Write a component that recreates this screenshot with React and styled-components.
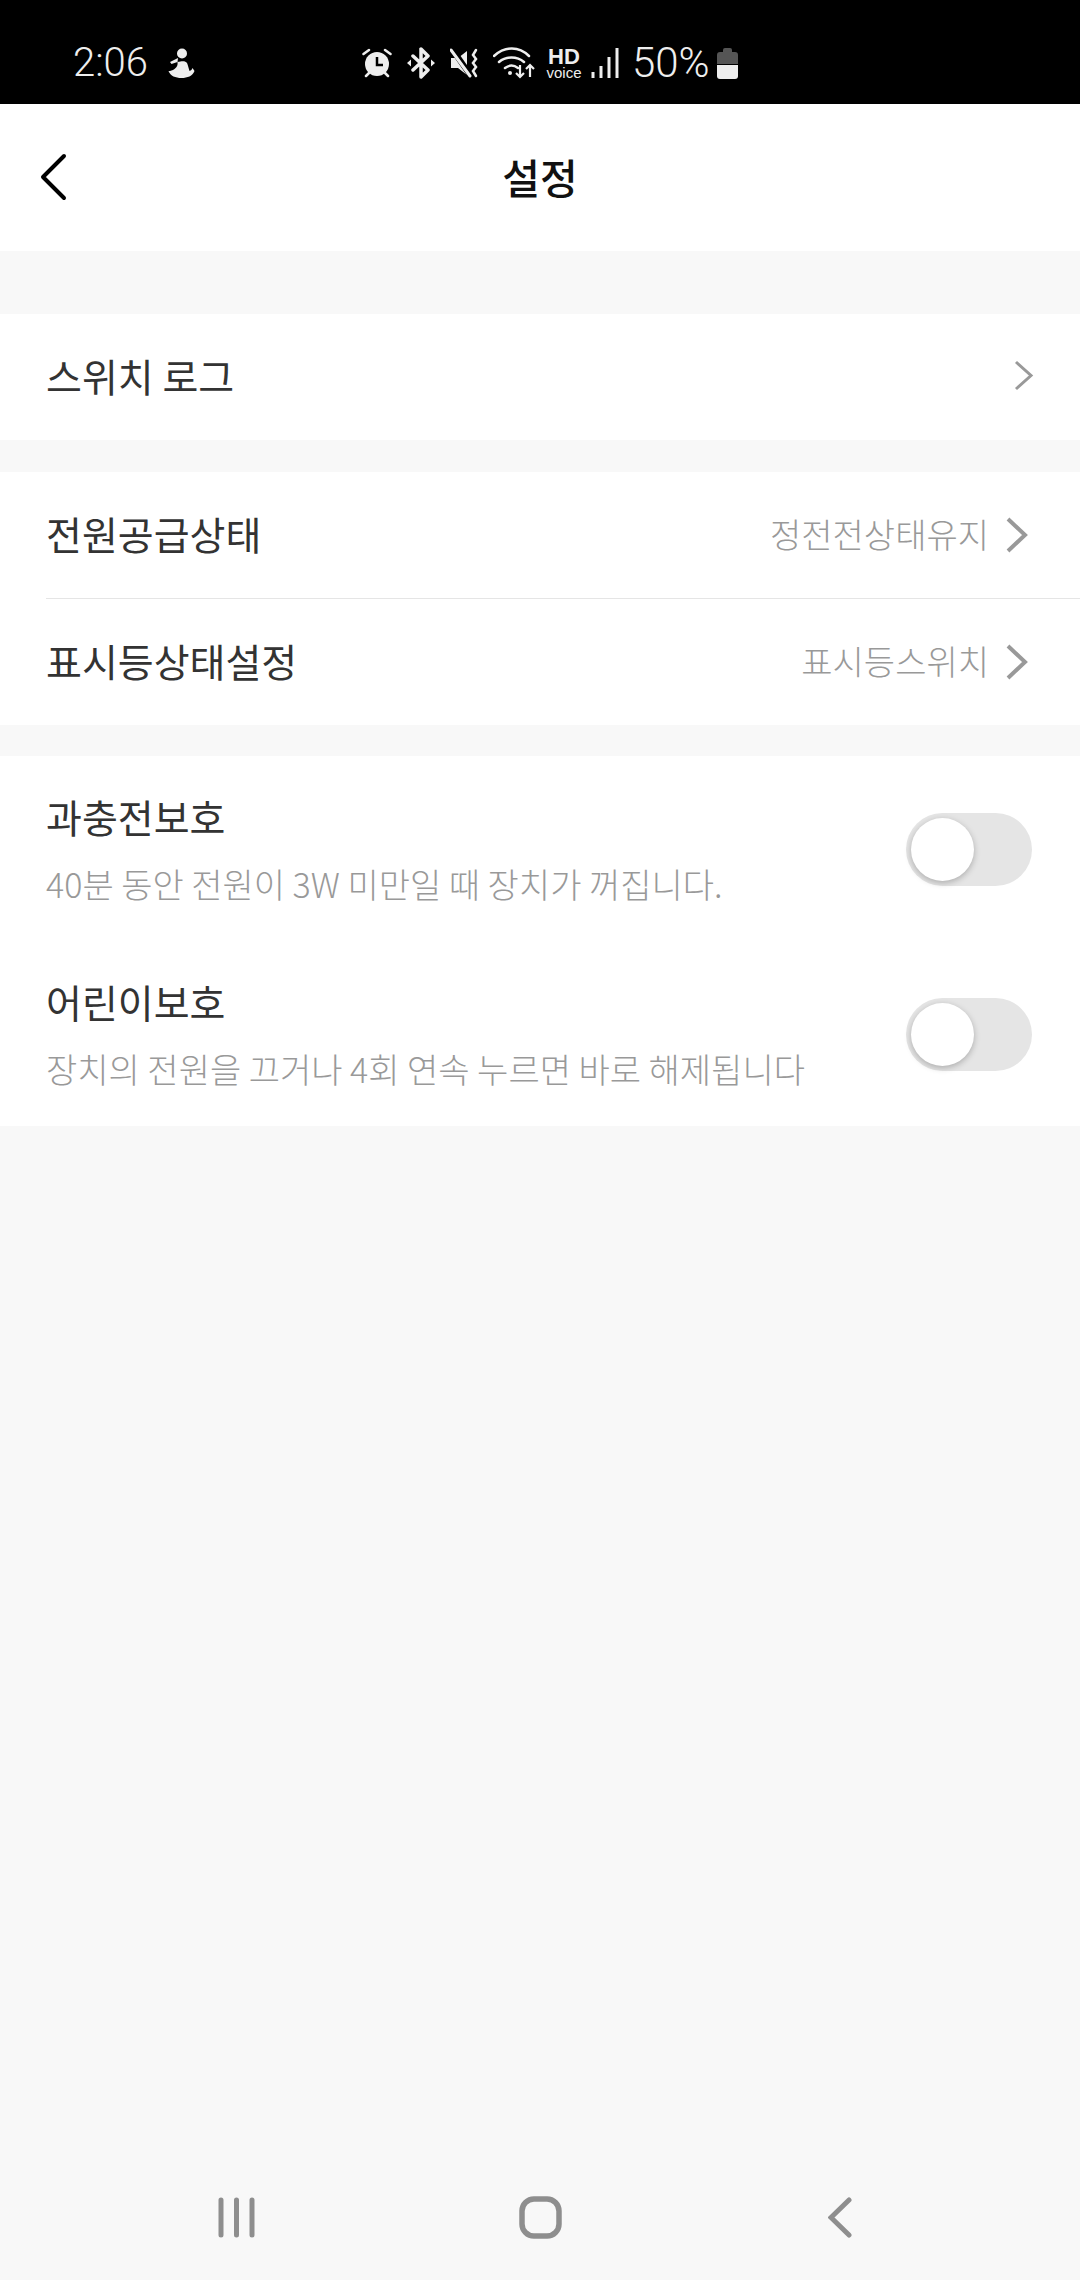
import styled, { createGlobalStyle } from 'styled-components';

const GlobalStyle = createGlobalStyle`
  html, body {
    margin: 0;
    padding: 0;
    background: #f8f8f8;
  }
  * {
    box-sizing: border-box;
  }
`;

const KR = `'Noto Sans CJK KR', 'Noto Sans', sans-serif`;

const ToggleRowItem = ({ title, desc }) => (
  <ToggleRow>
    <ToggleText>
      <RowLabel>{title}</RowLabel>
      <Desc>{desc}</Desc>
    </ToggleText>
    <Switch>
      <Knob />
    </Switch>
  </ToggleRow>
);

const Chevron = ({ thin }) =>
  thin ? (
    <ThinChevron width="20" height="31" viewBox="0 0 20 31">
      <path d="M2 2l15 13.500L2 29" fill="none" stroke="#999" strokeWidth="3" />
    </ThinChevron>
  ) : (
    <ChevronSvg width="22" height="36" viewBox="0 0 22 36">
      <path d="M2 2l17 16L2 34" fill="none" stroke="#999" strokeWidth="4" />
    </ChevronSvg>
  );

const App = () => {
  return (
    <Page>
      <GlobalStyle />
      <StatusBar>
        <Time>2:06</Time>
        <StatusIcon $left={19} width="28" height="31" viewBox="0 0 28 31">
          <circle cx="15" cy="5.500" r="5" fill="#eee" />
          <path d="M11 10L3 14l1.500 2 6-2c.5 3-.5 5-3 7-2 1.500-4 2-6 2 2 5 7 7 13 7s11-2 13-7l-2-3c-.5 1.500-1.500 2.500-3 3-1-3-1.500-6-2.500-8-1.500-2-4-2.500-9.500-1z" fill="#eee" />
        </StatusIcon>
        <StatusIcon $left={167} width="30" height="30" viewBox="0 0 30 30">
          <circle cx="15" cy="16" r="12" fill="#eee" />
          <path d="M15 9v8h6" fill="none" stroke="#000" strokeWidth="2.500" />
          <path d="M1.500 6L7 2M28.500 6L23 2M4 28l3-3M26 28l-3-3" stroke="#eee" strokeWidth="2.500" strokeLinecap="round" />
        </StatusIcon>
        <StatusIcon $left={15} width="28" height="32" viewBox="0 0 28 32">
          <path d="M14 2v28l7-7L6 9M14 2l7 7L6 23" fill="none" stroke="#eee" strokeWidth="3.500" strokeLinejoin="round" strokeLinecap="round" />
          <path d="M0 16l4-3.500v7zM28 16l-4-3.500v7z" fill="#eee" />
        </StatusIcon>
        <StatusIcon $left={15} width="30" height="30" viewBox="0 0 30 30">
          <path d="M1 10h7l9-7v24l-9-7H1z" fill="#eee" />
          <path d="M2 1l19 27" stroke="#000" strokeWidth="6" />
          <path d="M1 2l19 26" stroke="#eee" strokeWidth="3" strokeLinecap="round" />
          <path d="M26 2l-3 5 3 4-3 4 3 4-3 4 3 5" fill="none" stroke="#eee" strokeWidth="2.500" strokeLinecap="round" />
        </StatusIcon>
        <StatusIcon $left={13} width="42" height="32" viewBox="0 0 42 32">
          <path d="M1 9C12-1 26-1 36 9M6 15c7-6 18-6 25 0M12 21c4-3 9-3 13 0" fill="none" stroke="#eee" strokeWidth="2.500" strokeLinecap="round" />
          <circle cx="17" cy="26" r="2" fill="#eee" />
          <path d="M27 18v12M23 26l4 4 4-4M37 30V18M33 22l4-4 4 4" fill="none" stroke="#eee" strokeWidth="2.200" />
        </StatusIcon>
        <HdBlock>
          <HdText>HD</HdText>
          <VoiceText>voice</VoiceText>
        </HdBlock>
        <StatusIcon $left={10} width="28" height="30" viewBox="0 0 28 30">
          <path d="M2 24v6M10 18v12M18 9v21M26 0v30" stroke="#eee" strokeWidth="3" />
        </StatusIcon>
        <Battery>50%</Battery>
        <StatusIcon $left={7} width="21" height="32" viewBox="0 0 21 32">
          <path d="M6 3a2 2 0 0 1 2-2h5a2 2 0 0 1 2 2v2h3a3 3 0 0 1 3 3v9H0V8a3 3 0 0 1 3-3h3z" fill="#555" />
          <path d="M0 18h21v11a3 3 0 0 1-3 3H3a3 3 0 0 1-3-3z" fill="#eee" />
        </StatusIcon>
      </StatusBar>

      <Header>
        <BackButton width="28" height="48" viewBox="0 0 28 48">
          <path d="M24 3L3 24l21 21" fill="none" stroke="#000" strokeWidth="4" strokeLinecap="round" strokeLinejoin="round" />
        </BackButton>
        <Title>설정</Title>
      </Header>

      <Group $top={63}>
        <Row>
          <RowTitle>스위치 로그</RowTitle>
          <Chevron thin />
        </Row>
      </Group>

      <Group $top={32}>
        <Row>
          <RowTitle>전원공급상태</RowTitle>
          <RowRight>
            <Value>정전전상태유지</Value>
            <Chevron />
          </RowRight>
        </Row>
        <Divider />
        <Row>
          <RowTitle>표시등상태설정</RowTitle>
          <RowRight>
            <Value>표시등스위치</Value>
            <Chevron />
          </RowRight>
        </Row>
      </Group>

      <Group $top={31}>
        <ToggleRowItem title="과충전보호" desc="40분 동안 전원이 3W 미만일 때 장치가 꺼집니다." />
        <ToggleRowItem title="어린이보호" desc="장치의 전원을 끄거나 4회 연속 누르면 바로 해제됩니다" />
      </Group>

      <NavBar>
        <NavIcon width="37" height="41" viewBox="0 0 37 41">
          <path d="M3 3v35M18.500 3v35M34 3v35" stroke="#8e8e8e" strokeWidth="5" strokeLinecap="round" />
        </NavIcon>
        <NavIcon width="43" height="43" viewBox="0 0 43 43">
          <rect x="3" y="3" width="37" height="37" rx="12" fill="none" stroke="#8e8e8e" strokeWidth="5.500" />
        </NavIcon>
        <NavIcon width="24" height="41" viewBox="0 0 24 41">
          <path d="M21 3L3 20.500 21 38" fill="none" stroke="#8e8e8e" strokeWidth="5" strokeLinecap="round" />
        </NavIcon>
      </NavBar>
    </Page>
  );
};

const Page = styled.div`
  width: 1080px;
  height: 2280px;
  background: #f8f8f8;
  display: flex;
  flex-direction: column;
  overflow: hidden;
  font-family: ${KR};
`;
const StatusBar = styled.div`
  height: 104px;
  background: #000;
  display: flex;
  align-items: center;
  padding: 22px 0 0 73px;
  flex-shrink: 0;
`;
const Time = styled.span`
  font-family: Roboto, sans-serif;
  font-weight: 300;
  font-size: 40px;
  line-height: 46px;
  color: #eee;
`;
const Battery = styled(Time)`
  margin-left: 13px;
  font-size: 42px;
`;
const StatusIcon = styled.svg`
  display: block;
  flex-shrink: 0;
  margin-left: ${(p) => p.$left}px;
`;
const HdBlock = styled.div`
  margin-left: 12px;
  width: 34px;
  display: flex;
  flex-direction: column;
  align-items: center;
  font-family: 'Liberation Sans', sans-serif;
  color: #eee;
`;
const HdText = styled.span`
  font-size: 22px;
  line-height: 18px;
  font-weight: 700;
`;
const VoiceText = styled.span`
  font-size: 15px;
  line-height: 13px;
`;
const Header = styled.header`
  height: 147px;
  background: #fff;
  position: relative;
  display: flex;
  align-items: center;
  justify-content: center;
  flex-shrink: 0;
`;
const BackButton = styled.svg`
  position: absolute;
  left: 40px;
  top: 49px;
`;
const Title = styled.h1`
  margin: 0 0 2px;
  font-size: 41px;
  font-weight: 500;
  color: #111;
  line-height: 1;
`;
const Group = styled.section`
  margin-top: ${(p) => p.$top}px;
  background: #fff;
`;
const Row = styled.div`
  height: 126px;
  display: flex;
  align-items: center;
  justify-content: space-between;
  padding-left: 46px;
`;
const RowLabel = styled.div`
  font-size: 39px;
  line-height: 50px;
  color: #333;
`;
const RowTitle = styled(RowLabel)`
  margin-bottom: 5px;
`;
const RowRight = styled.div`
  display: flex;
  align-items: center;
`;
const Value = styled.span`
  font-size: 34px;
  font-weight: 300;
  color: #999;
  margin: 0 17px 3px 0;
`;
const ChevronSvg = styled.svg`
  display: block;
  margin-right: 52px;
`;
const ThinChevron = styled(ChevronSvg)`
  margin: 0 46px 3px 0;
`;
const Divider = styled.div`
  height: 1px;
  margin-left: 46px;
  background: #e5e5e5;
`;
const ToggleRow = styled.div`
  height: 185px;
  display: flex;
  align-items: center;
  justify-content: space-between;
  padding: 2px 48px 0 46px;
`;
const ToggleText = styled.div`
  display: flex;
  flex-direction: column;
  gap: 18px;
`;
const Desc = styled.div`
  font-size: 34px;
  font-weight: 300;
  line-height: 50px;
  color: #999;
`;
const Switch = styled.div`
  width: 126px;
  height: 73px;
  border-radius: 37px;
  background: #e5e5e5;
  padding: 5px;
  flex-shrink: 0;
`;
const Knob = styled.div`
  width: 63px;
  height: 63px;
  border-radius: 50%;
  background: #fff;
  box-shadow: 0 2px 6px rgba(0, 0, 0, 0.25);
`;
const NavBar = styled.nav`
  margin-top: auto;
  height: 126px;
  padding: 0 0 0 84px;
  display: grid;
  grid-template-columns: 304px 304px 296px;
  align-items: center;
  justify-items: center;
`;
const NavIcon = styled.svg`
  display: block;
`;

export default App;
